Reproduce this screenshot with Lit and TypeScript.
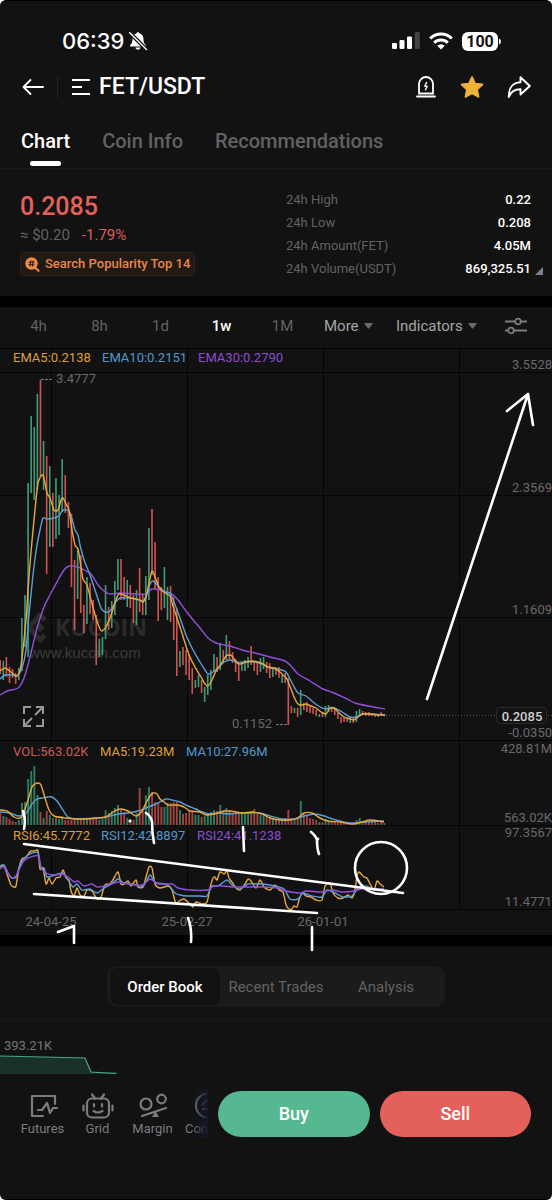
import { LitElement, html, svg, css } from "lit";
import { customElement, state } from "lit/decorators.js";
import { classMap } from "lit/directives/class-map.js";

type Point = [number, number];

/* Weekly candles as [high, low], in chart units; a negative high marks a falling week. */
const CANDLES: Point[] = [
  [-660, 674], [661, 680], [-657, 677], [-667, 683], [-669, 678], [-673, 684], [668, 680], [618, 671], [595, 647],
  [483, 657], [416, 493], [427, 500], [394, 490], [-380, 477], [441, 490], [-456, 574], [466, 547], [-493, 547],
  [478, 539], [495, 535], [459, 512], [-475, 513], [-502, 528], [-514, 587], [-560, 630], [550, 599], [-555, 613],
  [-605, 633], [577, 624], [-583, 614], [-600, 620], [-615, 665], [639, 657], [637, 655], [585, 639], [-607, 630],
  [601, 628], [581, 615], [559, 590], [-559, 600], [-577, 600], [580, 607], [-585, 608], [-595, 623], [590, 625],
  [-568, 612], [-595, 615], [576, 615], [528, 600], [-509, 575], [-542, 590], [-577, 621], [-587, 610], [567, 608],
  [587, 620], [-586, 622], [-597, 640], [-608, 676], [651, 667], [-647, 665], [-650, 675], [-655, 680], [-668, 694],
  [680, 688], [675, 687], [-680, 693], [687, 702], [675, 695], [670, 690], [654, 672], [-657, 672], [643, 670],
  [-650, 663], [635, 660], [-641, 660], [-652, 663], [-659, 672], [-663, 681], [662, 671], [660, 671], [657, 668],
  [-646, 665], [-662, 671], [-663, 675], [658, 672], [657, 669], [-662, 673], [-663, 678], [668, 677], [-667, 675],
  [-667, 678], [675, 683], [-673, 683], [-678, 725], [-706, 713], [708, 713], [-708, 717], [690, 715], [-703, 710],
  [-702, 712], [-706, 713], [-708, 714], [-710, 716], [714, 717], [-712, 717], [706, 717], [705, 712], [-707, 712],
  [-708, 715], [-713, 719], [-717, 723], [-717, 722], [-717, 722], [717, 723], [-718, 723], [711, 722], [709, 715],
  [-711, 715], [-712, 716], [-712, 716], [-713, 716], [-714, 717], [715, 717], [-712, 715], [714, 716],
];

const VOLUMES: number[] = [
  12, 9, 8, 6, 4, 3, 5, 22, 23, 46, 54, 59, 30, 13, 7, 14, 10, 7, 7, 6, 9, 5, 5, 5, 6, 5, 5, 5, 7, 7, 6, 6, 5, 6, 15,
  12, 14, 17, 20, 15, 13, 7, 6, 5, 12, 37, 15, 30, 38, 33, 23, 22, 18, 18, 22, 22, 23, 23, 15, 11, 12, 15, 14, 10, 10,
  8, 9, 12, 13, 15, 14, 20, 13, 17, 15, 12, 12, 12, 11, 11, 12, 14, 16, 11, 10, 9, 8, 8, 7, 6, 6, 5, 7, 15, 7, 6, 8,
  24, 11, 10, 7, 6, 5, 3, 3, 6, 4, 3, 3, 2, 2, 2, 2, 2, 2, 5, 7, 4, 4, 3, 3, 3, 2, 3, 2,
];

const PRICE_LINES: { tone: string; points: string }[] = [
  {
    tone: "violet",
    points:
      "0,695 7,691 18,688 24,678 30,657 37,628 44,607 51,593 58,580 64,570 69,566 78,567 84,570 91,574 98,585 104,591 110,594 120,593 136,594 146,594 152,589 160,590 172,594 178,600 186,611 194,621 200,628 208,638 216,643 224,645 230,646 242,650 255,653 270,657 285,661 291,666 298,674 310,681 323,689 334,693 345,698 355,703 368,706 385,709",
  },
  {
    tone: "blue",
    points:
      "0,679 5,675 12,675 17,676 22,668 26,650 29,615 33,575 37,545 40,530 43,518 47,519 54,518 59,516 63,510 69,511 72,519 75,530 78,535 80,545 84,560 90,575 96,593 101,608 105,612 110,611 115,603 120,598 128,598 136,599 143,601 147,594 150,584 153,581 158,586 164,592 170,593 174,602 180,618 186,635 193,650 200,662 205,670 208,674 213,672 218,668 224,662 230,660 237,662 246,662 254,662 262,664 270,668 278,669 286,672 292,683 298,693 306,696 313,702 320,707 326,709 334,708 342,712 350,717 356,717 362,714 372,714 385,715",
  },
  {
    tone: "amber",
    points:
      "0,671 5,668 11,672 17,676 21,665 26,620 28,590 31,552 35,510 38,483 43,475 47,493 50,498 54,510 58,510 61,500 63,498 66,504 69,510 72,530 75,545 78,549 80,560 83,579 87,585 91,600 96,618 100,629 102,631 106,627 110,618 114,606 118,595 121,594 126,596 131,598 136,599 140,600 143,602 146,597 149,583 152,571 155,577 159,587 165,593 170,596 173,606 177,618 181,630 186,646 190,657 195,667 201,677 205,684 208,686 212,680 216,671 221,664 226,656 229,655 232,656 236,662 240,664 246,662 252,661 258,662 263,664 268,667 274,668 280,672 284,676 287,679 291,689 295,699 298,704 302,705 306,704 311,706 316,708 321,712 326,714 330,708 334,708 338,712 344,717 350,719 354,720 358,717 363,714 370,714 378,715 385,715",
  },
];

const VOLUME_LINES: { tone: string; points: string }[] = [
  {
    tone: "blue",
    points:
      "0,812 10,813 18,816 26,813 32,804 37,799 42,798 48,797 52,797 57,801 63,810 68,817 78,819 100,818 110,816 118,814 128,813 138,811 146,808 156,804 166,799 172,800 180,802 188,806 196,809 202,812 210,814 218,813 230,814 238,813 250,813 260,813 270,816 282,819 294,819 304,816 315,814 324,816 336,820 350,823 366,822 384,821",
  },
  {
    tone: "amber",
    points:
      "0,810 7,811 14,817 20,818 24,812 28,800 32,787 35,784 38,783 41,785 45,798 49,810 54,816 65,818 80,819 95,818 106,817 113,812 120,809 128,811 136,816 142,811 146,803 150,796 153,793 157,794 160,799 164,802 168,805 178,805 184,807 190,811 200,812 206,815 214,814 224,811 230,811 236,812 244,813 252,812 262,814 270,818 280,820 290,820 298,818 304,813 312,813 320,818 328,821 340,822 352,824 362,822 370,820 384,822",
  },
];

const RSI_LINES: { tone: string; points: string }[] = [
  {
    tone: "amber",
    points:
      "0,867 4,866 8,877 11,885 14,887 16,886 19,868 22,859 26,857 29,853 31,851 34,851 38,851 40,869 43,868 46,884 49,878 52,884 56,878 60,877 63,870 66,878 69,880 71,891 74,896 77,888 80,895 84,896 87,890 92,891 97,899 101,897 105,885 110,884 114,878 118,872 121,884 124,884 128,881 131,886 136,880 138,887 143,887 146,877 149,867 152,868 155,884 160,888 168,886 172,890 176,904 179,901 184,899 190,904 193,907 196,902 202,904 207,902 210,888 213,878 215,877 217,880 220,872 224,874 227,871 229,878 232,882 236,888 240,890 245,884 248,879 251,881 256,888 260,880 264,887 270,890 275,885 279,890 283,892 286,905 289,909 292,909 294,906 297,907 299,900 302,893 306,896 311,897 316,900 322,900 325,886 330,883 333,893 338,898 343,898 348,895 352,898 355,890 357,876 359,872 364,877 367,878 370,884 374,890 377,881 380,884 384,887",
  },
  {
    tone: "blue",
    points:
      "0,866 4,865 8,873 12,878 16,877 19,868 22,861 28,855 32,853 38,853 41,868 44,868 47,877 52,876 58,874 63,873 68,880 73,887 77,884 82,890 90,889 97,893 104,888 110,885 118,879 124,883 132,884 143,886 150,875 155,882 168,885 175,893 180,895 188,896 200,896 207,896 212,886 218,886 227,880 232,885 240,889 248,884 262,884 275,886 284,889 290,899 298,899 303,893 312,896 322,897 327,890 335,893 343,897 352,896 358,888 366,886 374,890 384,889",
  },
  {
    tone: "violet",
    points:
      "0,869 4,867 8,874 12,878 16,876 19,870 23,862 28,858 38,856 41,868 46,873 54,875 62,874 68,877 74,882 78,881 84,886 92,884 97,887 105,886 118,882 128,884 142,885 150,879 158,884 172,884 178,888 190,890 207,890 214,886 224,886 234,887 248,887 262,887 278,888 286,891 300,893 306,891 322,892 332,890 342,892 354,891 362,889 374,889 384,889",
  },
];

/* Rounds a list of points into a curve that passes through each of them. */
function curve(list: string): string {
  const p = list.split(" ").map((s) => s.split(",").map(Number) as Point);
  let d = `M${p[0][0]} ${p[0][1]}`;
  for (let i = 0; i < p.length - 1; i++) {
    const a = p[i - 1] ?? p[i];
    const b = p[i];
    const c = p[i + 1];
    const e = p[i + 2] ?? c;
    const f = (n: number) => n.toFixed(1);
    d += `C${f(b[0] + (c[0] - a[0]) / 8)} ${f(b[1] + (c[1] - a[1]) / 8)} ${f(c[0] - (e[0] - b[0]) / 8)} ${f(
      c[1] - (e[1] - b[1]) / 8
    )} ${c[0]} ${c[1]}`;
  }
  return d;
}

@customElement("market-chart")
export class MarketChart extends LitElement {
  static styles = css`
    :host {
      display: block;
      position: relative;
      z-index: 1;
    }
    .plot {
      display: block;
      width: 100%;
      overflow: visible;
      font-family: Roboto, sans-serif;
      font-size: 13px;
    }
    .grid { stroke: #050505; fill: none; }
    .up { fill: #3f9c78; }
    .down { fill: #cf5450; }
    .vol-up { fill: #2e7d60; }
    .vol-down { fill: #a14341; }
    .line { fill: none; stroke-width: 1.4; stroke-linejoin: round; }
    .line.amber { stroke: #e9a83c; }
    .line.blue { stroke: #5a9fd6; }
    .line.violet { stroke: #9350dc; }
    .t-amber { fill: #dd9f3a; }
    .t-blue { fill: #5398cc; }
    .t-violet { fill: #8c4cd2; }
    .t-red { fill: #cf5a5a; }
    .axis { fill: #68686b; }
    .end { text-anchor: end; }
    .mid { text-anchor: middle; }
    .dash { stroke: #77777a; stroke-dasharray: 3 1; }
    .dots { stroke: #55555a; stroke-dasharray: 1 2; }
    .tag { fill: #131313; stroke: #2a2a2c; }
    .tag-text { fill: #d0d0d2; font-weight: 500; text-anchor: middle; }
    .mark { fill: #2b2b2c; }
    .logo { fill: none; stroke: #2b2b2c; stroke-width: 5; stroke-linejoin: round; }
    .brand { font: 700 23px "Open Sans", sans-serif; }
    .site { font: 15px "Liberation Sans", sans-serif; fill: #3c3c3e; }
    .expand { fill: none; stroke: #98989a; stroke-width: 2; }
    .pen { fill: none; stroke: #fff; stroke-width: 2.6; stroke-linecap: round; stroke-linejoin: round; }
    .pen-dot { fill: #fff; }
  `;

  private lines(set: { tone: string; points: string }[]) {
    return set.map((l) => svg`<path class="line ${l.tone}" d=${curve(l.points)} />`);
  }

  render() {
    const x = (i: number) => 0.2 + i * 3.098;
    return html`
      <svg class="plot" viewBox="0 348 552 587" role="img" aria-label="FET/USDT weekly price chart">
        <path class="grid" d="M0 348.5H552M0 372.5H552M0 495.5H552M0 617.5H552M0 740.5H552M0 825.5H552M0 909.5H552" />
        <path class="grid" d="M51.5 348V910M187.5 348V910M323.5 348V910M459.5 348V910" />

        <g class="mark">
          <path class="logo" d="M45 620l-5-5-11 12.500 11 12.500 5-5" />
          <path d="M40 622.500l5 5-5 5-5-5z" />
          <text class="brand" x="55" y="636">KUCOIN</text>
          <text class="site" x="29" y="658">www.kucoin.com</text>
        </g>

        ${CANDLES.map(
          ([hi, lo], i) => svg`<rect class=${hi > 0 ? "up" : "down"} x=${x(i) - 0.8} y=${Math.abs(hi)} width="1.6"
            height=${lo - Math.abs(hi)} />`
        )}
        ${this.lines(PRICE_LINES)}
        ${VOLUMES.map(
          (v, i) => svg`<rect class=${CANDLES[i][0] > 0 ? "vol-up" : "vol-down"} x=${x(i) - 0.9} y=${825 - v}
            width="1.9" height=${v} />`
        )}
        ${this.lines(VOLUME_LINES)} ${this.lines(RSI_LINES)}

        <text class="t-amber" x="13" y="362">EMA5:0.2138</text>
        <text class="t-blue" x="102" y="362">EMA10:0.2151</text>
        <text class="t-violet" x="198" y="362">EMA30:0.2790</text>
        <text class="t-red" x="13" y="756">VOL:563.02K</text>
        <text class="t-amber" x="100" y="756">MA5:19.23M</text>
        <text class="t-blue" x="186" y="756">MA10:27.96M</text>
        <text class="t-amber" x="13" y="840">RSI6:45.7772</text>
        <text class="t-blue" x="101" y="840">RSI12:42.8897</text>
        <text class="t-violet" x="197" y="840">RSI24:41.1238</text>

        <path class="dash" d="M41 379.5h12M276 724.5h12" />
        <text class="axis" x="56" y="383">3.4777</text>
        <text class="axis end" x="272" y="728">0.1152</text>

        <path class="dots" d="M386 715.5H552" />
        <rect class="tag" x="496.5" y="707.5" width="50" height="16" rx="3" />
        <text class="tag-text" x="522" y="721">0.2085</text>
        <g class="axis end">
          <text x="552" y="369">3.5528</text>
          <text x="552" y="492">2.3569</text>
          <text x="552" y="614">1.1609</text>
          <text x="552" y="737">-0.0350</text>
          <text x="552" y="753">428.81M</text>
          <text x="552" y="822">563.02K</text>
          <text x="552" y="837">97.3567</text>
          <text x="552" y="906">11.4771</text>
        </g>
        <g class="axis mid">
          <text x="51" y="926">24-04-25</text>
          <text x="187" y="926">25-02-27</text>
          <text x="323" y="926">26-01-01</text>
        </g>

        <path
          class="expand"
          d="M24 714v-7h7M36 707h7v7M43 707l-8 8M43 719v7h-7M24 719v7h7M24 726l8-8"
        />

        <g class="pen">
          <path d="M427 699L528 394M507 411L528 394L533 425" />
          <path d="M24 844L403 893M34 894L317 913" />
          <circle cx="381" cy="868" r="26" />
          <path d="M23 811q3 8 1 18M146 813q5 3 6 9 0 11 2 21M243 827l1 24M311 832q5 4 6 8 0 9 2 14M317 840l1-1" />
          <path d="M58 932l16-6v17M188 918q4 10 3 24M312 927v23" />
        </g>
        <circle class="pen-dot" cx="130" cy="821" r="1.6" />
      </svg>
    `;
  }
}

@customElement("app-root")
export class AppRoot extends LitElement {
  static styles = css`
    :host {
      display: block;
      background: #fff;
      color: #fff;
      font: 13px/16px Roboto, sans-serif;
    }
    * { box-sizing: border-box; }
    button, select {
      font: inherit;
      color: inherit;
      background: none;
      border: 0;
      margin: 0;
      padding: 0;
      cursor: pointer;
    }
    svg { display: block; flex: none; }
    .screen {
      min-height: 100vh;
      display: flex;
      flex-direction: column;
      background: #121212;
      border: solid #000;
      border-width: 1px 0;
      border-radius: 6px;
      overflow: hidden;
    }
    .status {
      display: flex;
      align-items: center;
      height: 62px;
      padding: 18px 51px 0 62px;
    }
    .clock { font: 500 22px/26px Inter, sans-serif; margin-right: 4px; }
    .push { flex: 1; }
    .signals { display: flex; align-items: center; gap: 9px; }
    .head {
      display: flex;
      align-items: center;
      height: 48px;
      padding: 0 21px 0 22px;
    }
    .split { width: 1px; height: 22px; margin: 0 14px 0 13px; background: #262626; }
    .pair { margin: 0; padding-left: 9px; font: 500 23px/28px Roboto, sans-serif; }
    .menu { display: flex; align-items: center; }
    .tools { display: flex; align-items: center; gap: 22px; }
    .tabs {
      display: flex;
      gap: 32px;
      padding: 18px 21px 2px;
      height: 58px;
      border-bottom: 1px solid #191919;
      font: 500 20px/24px Roboto, sans-serif;
      color: #626264;
    }
    .tab { display: flex; flex-direction: column; align-items: center; gap: 8px; }
    .tab.on { color: #fff; }
    .tab.on::after { content: ""; width: 31px; height: 5px; border-radius: 3px; background: #fff; }
    .summary {
      display: grid;
      grid-template-columns: 1fr 257px;
      height: 127px;
      padding: 19px 9px 0 20px;
    }
    .price { margin: 4px 0 0; font: 500 25px/30px Roboto, sans-serif; color: #e7605c; }
    .fiat { display: flex; gap: 12px; margin: 4px 0 8px; font-size: 15px; line-height: 18px; color: #626264; }
    .drop { color: #dd5c5c; }
    .badge {
      display: inline-flex;
      align-items: center;
      gap: 5px;
      height: 24px;
      padding: 0 4px;
      border: 1px solid #33241b;
      border-radius: 4px;
      background: #211914;
      color: #e8874a;
      font-weight: 500;
      font-size: 13px;
    }
    .stats { margin: 0; font-size: 13px; line-height: 23px; }
    .stat { display: flex; align-items: center; }
    .stats dt { flex: 1; color: #626264; }
    .stats dd { margin: 0; font-weight: 500; }
    .corner { width: 12px; padding: 5px 0 0 4px; }
    .band { height: 11px; background: #000; }
    .frames {
      display: flex;
      align-items: center;
      height: 41px;
      padding: 0 25px 3px 8px;
      font-size: 15px;
      line-height: 20px;
      color: #626264;
    }
    .frame { width: 61px; }
    .frame.on { color: #fff; font-weight: 500; }
    .picks { flex: 1; display: flex; align-items: center; gap: 23px; padding-left: 11px; }
    .pick { display: flex; align-items: center; gap: 3px; color: #a5a5a7; }
    .pick select { appearance: none; outline: 0; }
    .more { width: 37px; }
    .indicators { width: 69px; }
    .settings { margin-left: auto; }
    .feed { display: flex; justify-content: center; padding: 20px 0 13px; border-bottom: 1px solid #1a1a1a; }
    .segments {
      display: grid;
      grid-template-columns: 110px 112px 108px;
      padding: 2px 5px 2px 3px;
      height: 41px;
      border-radius: 10px;
      background: #1b1b1b;
      font-size: 15px;
      color: #626264;
    }
    .segment { border-radius: 8px; white-space: nowrap; }
    .segment.on { background: #121212; color: #fff; font-weight: 500; }
    .depth { padding-top: 17px; color: #77777a; }
    .depth-label { display: block; padding-left: 4px; }
    .depth-plot { width: 100%; height: 20px; }
    .dock { display: flex; gap: 10px; align-items: center; padding: 15px 21px 58px 0; }
    .shortcuts {
      position: relative;
      flex: none;
      width: 208px;
      padding-left: 15px;
      display: flex;
      overflow: hidden;
    }
    .shortcuts::after {
      content: "";
      position: absolute;
      inset: 0 0 0 auto;
      width: 18px;
      background: linear-gradient(90deg, rgba(18, 22, 32, 0), rgba(18, 24, 36, 0.95));
    }
    .shortcut {
      flex: none;
      width: 55px;
      display: flex;
      flex-direction: column;
      align-items: center;
      gap: 2px;
      padding: 3px 0 1px;
      color: #7c7c7e;
      text-decoration: none;
    }
    .trade {
      flex: 1;
      height: 46px;
      border-radius: 23px;
      font: 500 18px/22px Roboto, sans-serif;
    }
    .buy { background: #55b890; }
    .sell { background: #e4605a; }
  `;

  @state() private tab = "Chart";
  @state() private frame = "1w";
  @state() private panel = "Order Book";

  private caret() {
    return html`<svg width="9" height="6" viewBox="0 0 9 6"><path fill="#68686b" d="M1 0h7q1 0 .6.9L5.2 5.3q-.7.9-1.4 0L.4.9Q0 0 1 0z" /></svg>`;
  }

  render() {
    return html`
      <div class="screen">
        <div class="status">
          <span class="clock">06:39</span>
          <svg width="20" height="20" viewBox="0 0 20 20" aria-label="Silent">
            <path fill="#fff" d="M10 1.2c.9 0 1.5.6 1.7 1.3 2.600.8 3.800 3 3.800 5.500 0 3.800 1 4.600 2.300 6.200.4.6.1 1.300-.6 1.300H2.800c-.7 0-1-.7-.6-1.300C3.500 12.600 4.500 11.800 4.500 8c0-2.500 1.200-4.700 3.800-5.500C8.500 1.800 9.100 1.200 10 1.200zM7.400 16.600h5.200c-.3 1.300-1.300 2.200-2.600 2.200s-2.300-.9-2.600-2.200z" />
            <path stroke="#121212" stroke-width="4" d="M1 1l18 18" />
            <path stroke="#fff" stroke-width="1.400" stroke-linecap="round" d="M1.500 1.500l17 17" />
          </svg>
          <span class="push"></span>
          <div class="signals">
            <svg width="28" height="18" viewBox="0 0 28 18" aria-label="Signal">
              <g fill="#fff">
                <rect x="0" y="11" width="5" height="6" rx="1.300" />
                <rect x="7.500" y="8" width="5" height="9" rx="1.300" />
                <rect x="15" y="4.500" width="5" height="12.500" rx="1.300" />
              </g>
              <rect x="22.800" y="0" width="5" height="17" rx="1.300" fill="#444" />
            </svg>
            <svg width="24" height="18" viewBox="0 0 24 18" aria-label="Wi-Fi">
              <g fill="none" stroke="#fff" stroke-width="3">
                <path d="M1.200 6.500a15.500 15.500 0 0 1 21.600 0" />
                <path d="M5.200 10.800a9.700 9.700 0 0 1 13.600 0" />
              </g>
              <path fill="#fff" d="M12 17.500l-3.700-3.800a5.300 5.300 0 0 1 7.400 0z" />
            </svg>
            <svg width="39" height="19" viewBox="0 0 39 19" aria-label="Battery 100">
              <rect width="36" height="19" rx="6" fill="#fff" />
              <path fill="#fff" d="M37 6.500q2 .8 2 3t-2 3z" />
              <text x="18" y="15" text-anchor="middle" font-family="Roboto, sans-serif" font-size="16" font-weight="700" fill="#121212">100</text>
            </svg>
          </div>
        </div>

        <header class="head">
          <button aria-label="Back">
            <svg width="22" height="20" viewBox="0 0 22 20" fill="none" stroke="#fff" stroke-width="1.800" stroke-linecap="round" stroke-linejoin="round">
              <path d="M21 10H1.500M8.500 3l-7 7 7 7" />
            </svg>
          </button>
          <span class="split"></span>
          <button class="menu">
            <svg width="18" height="18" viewBox="0 0 18 18" fill="none" stroke="#fff" stroke-width="2.200" aria-hidden="true">
              <path d="M0 2h18M0 9h10M0 16h18" />
            </svg>
            <h1 class="pair">FET/USDT</h1>
          </button>
          <span class="push"></span>
          <div class="tools">
            <button aria-label="Price alert">
              <svg width="22" height="24" viewBox="0 0 22 24" fill="none" stroke="#fff" stroke-width="1.800" stroke-linecap="round">
                <path d="M4 18.500V9a7 7 0 0 1 14 0v9.500zM2 21.500h18" />
                <path stroke-width="1.400" stroke-linejoin="round" d="M11.500 7.500L9.800 11.200h2.400L10.500 14.800" />
              </svg>
            </button>
            <button aria-label="Favourite">
              <svg width="26" height="24" viewBox="0 0 26 24">
                <path fill="#efb33a" stroke="#efb33a" stroke-width="2" stroke-linejoin="round" d="M13 2.200l3 6.600 7.300.8-5.400 4.900 1.500 7.200-6.400-3.600-6.400 3.600 1.500-7.200L2.700 9.600 10 8.800z" />
              </svg>
            </button>
            <button aria-label="Share">
              <svg width="24" height="24" viewBox="0 0 24 24" fill="none" stroke="#fff" stroke-width="1.900" stroke-linejoin="round">
                <path d="M13.500 2.200L22.800 11l-9.300 8.500v-5.200c-5.500-.2-9.300 2-11.700 7.700C1.500 13.500 5.500 7.600 13.500 7.300z" />
              </svg>
            </button>
          </div>
        </header>

        <nav class="tabs">
          ${["Chart", "Coin Info", "Recommendations"].map(
            (t) => html`<button class=${classMap({ tab: true, on: t === this.tab })} @click=${() => (this.tab = t)}>${t}</button>`
          )}
        </nav>

        <section class="summary">
          <div>
            <p class="price">0.2085</p>
            <div class="fiat"><span>≈ $0.20</span><span class="drop">-1.79%</span></div>
            <button class="badge">
              <svg width="15" height="15" viewBox="0 0 15 15">
                <path stroke="#f08c45" stroke-width="2.200" stroke-linecap="round" d="M10 10.500l3.500 3.300" />
                <circle cx="6.500" cy="6.500" r="6.200" fill="#f08c45" />
                <path fill="none" stroke="#211914" stroke-width="1.100" d="M5.800 3.500l-.8 6M8.300 3.500l-.8 6M3.700 5.300h5.800M3.500 7.700h5.800" />
              </svg>
              Search Popularity Top 14
            </button>
          </div>
          <dl class="stats">
            ${[
              ["24h High", "0.22"],
              ["24h Low", "0.208"],
              ["24h Amount(FET)", "4.05M"],
              ["24h Volume(USDT)", "869,325.51"],
            ].map(
              ([k, v], i) => html`<div class="stat">
                <dt>${k}</dt>
                <dd>${v}</dd>
                <span class="corner">
                  ${i === 3 ? html`<svg width="8" height="8" viewBox="0 0 8 8"><path fill="#7d828c" d="M8 0v8H0z" /></svg>` : ""}
                </span>
              </div>`
            )}
          </dl>
        </section>

        <div class="band"></div>

        <div class="frames">
          ${["4h", "8h", "1d", "1w", "1M"].map(
            (f) => html`<button class=${classMap({ frame: true, on: f === this.frame })} @click=${() => (this.frame = f)}>${f}</button>`
          )}
          <div class="picks">
            <div class="pick">
              <select class="more" aria-label="More intervals"><option>More</option></select>
              ${this.caret()}
            </div>
            <div class="pick">
              <select class="indicators" aria-label="Chart indicators"><option>Indicators</option></select>
              ${this.caret()}
            </div>
            <button class="settings" aria-label="Chart settings">
              <svg width="22" height="18" viewBox="0 0 22 18" fill="none" stroke="#7c7c7e" stroke-width="1.800">
                <path d="M0 4.500h10M16 4.500h6M0 13.500h3M9 13.500h13" />
                <circle cx="13" cy="4.500" r="2.800" />
                <circle cx="6" cy="13.500" r="2.800" />
              </svg>
            </button>
          </div>
        </div>

        <market-chart></market-chart>

        <div class="band"></div>

        <div class="feed">
          <div class="segments">
            ${["Order Book", "Recent Trades", "Analysis"].map(
              (p) => html`<button class=${classMap({ segment: true, on: p === this.panel })} @click=${() => (this.panel = p)}>${p}</button>`
            )}
          </div>
        </div>

        <section class="depth">
          <span class="depth-label">393.21K</span>
          <svg class="depth-plot" viewBox="0 0 552 20" preserveAspectRatio="none">
            <path fill="#1a3129" d="M0 2L85 4L91 18H118V20H0z" />
            <path fill="none" stroke="#4ba882" stroke-width="1.200" d="M0 2L85 4L91 18L116 19.500" />
          </svg>
        </section>

        <footer class="dock">
          <nav class="shortcuts">
            <a class="shortcut" href="#futures">
              <svg width="32" height="27" viewBox="0 0 32 27" fill="none" stroke="currentColor" stroke-width="2.200" stroke-linejoin="round" stroke-linecap="round">
                <path d="M16 24H5V4h23v8M11 18h4l5-7 3 10 3-5h4" />
              </svg>
              Futures
            </a>
            <a class="shortcut" href="#grid">
              <svg width="32" height="27" viewBox="0 0 32 27" fill="none" stroke="currentColor" stroke-width="2.200" stroke-linecap="round">
                <rect x="5" y="6.500" width="22" height="19" rx="5" />
                <path d="M13 6.500l-3-4M19 6.500l3-4M1.500 13.500v5M30.500 13.500v5M12 12v2.500M20 12v2.500M11.500 19q4.500 3 9 0" />
              </svg>
              Grid
            </a>
            <a class="shortcut" href="#margin">
              <svg width="32" height="27" viewBox="0 0 32 27" fill="none" stroke="currentColor" stroke-width="2.200" stroke-linecap="round">
                <circle cx="9" cy="12" r="5.500" />
                <circle cx="24.500" cy="7" r="4.300" />
                <path d="M5 24l24-8" />
                <path fill="currentColor" stroke="none" d="M18.500 19l3.500 6h-7z" />
              </svg>
              Margin
            </a>
            <a class="shortcut" href="#convert">
              <svg width="32" height="27" viewBox="0 0 32 27" fill="none" stroke="currentColor" stroke-width="2.200" stroke-linecap="round">
                <circle cx="16" cy="13.500" r="12" />
                <path d="M11 12l4-4M11 17h10M21 15l-4 4" />
              </svg>
              Convert
            </a>
          </nav>
          <button class="trade buy">Buy</button>
          <button class="trade sell">Sell</button>
        </footer>
      </div>
    `;
  }
}
